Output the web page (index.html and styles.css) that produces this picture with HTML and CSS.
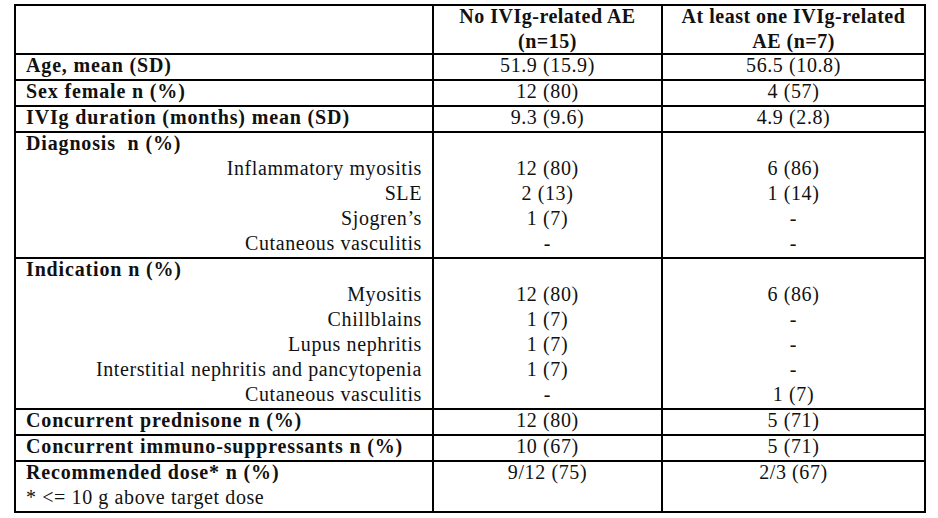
FILE: index.html
```html
<!DOCTYPE html>
<html>
<head>
<meta charset="utf-8">
<link rel="stylesheet" href="styles.css">
</head>
<body>
<table class="tbl">
  <colgroup>
    <col class="c1"><col class="c2"><col class="c3">
  </colgroup>
  <tr class="head">
    <td></td>
    <td class="val"><div class="ln">No IVIg-related AE</div><div class="ln">(n=15)</div></td>
    <td class="val"><div class="ln">At least one IVIg-related</div><div class="ln">AE (n=7)</div></td>
  </tr>
  <tr>
    <td class="lbl"><div class="ln">Age, mean (SD)</div></td>
    <td class="val"><div class="ln">51.9 (15.9)</div></td>
    <td class="val"><div class="ln">56.5 (10.8)</div></td>
  </tr>
  <tr>
    <td class="lbl"><div class="ln">Sex female n (%)</div></td>
    <td class="val"><div class="ln">12 (80)</div></td>
    <td class="val"><div class="ln">4 (57)</div></td>
  </tr>
  <tr>
    <td class="lbl"><div class="ln">IVIg duration (months) mean (SD)</div></td>
    <td class="val"><div class="ln">9.3 (9.6)</div></td>
    <td class="val"><div class="ln">4.9 (2.8)</div></td>
  </tr>
  <tr class="group">
    <td class="lbl">
      <div class="ln">Diagnosis&nbsp; n (%)</div>
      <div class="ln sub">Inflammatory myositis</div>
      <div class="ln sub">SLE</div>
      <div class="ln sub">Sjogren’s</div>
      <div class="ln sub">Cutaneous vasculitis</div>
    </td>
    <td class="val">
      <div class="ln">&nbsp;</div>
      <div class="ln">12 (80)</div>
      <div class="ln">2 (13)</div>
      <div class="ln">1 (7)</div>
      <div class="ln">-</div>
    </td>
    <td class="val">
      <div class="ln">&nbsp;</div>
      <div class="ln">6 (86)</div>
      <div class="ln">1 (14)</div>
      <div class="ln">-</div>
      <div class="ln">-</div>
    </td>
  </tr>
  <tr class="group">
    <td class="lbl">
      <div class="ln">Indication n (%)</div>
      <div class="ln sub">Myositis</div>
      <div class="ln sub">Chillblains</div>
      <div class="ln sub">Lupus nephritis</div>
      <div class="ln sub">Interstitial nephritis and pancytopenia</div>
      <div class="ln sub">Cutaneous vasculitis</div>
    </td>
    <td class="val">
      <div class="ln">&nbsp;</div>
      <div class="ln">12 (80)</div>
      <div class="ln">1 (7)</div>
      <div class="ln">1 (7)</div>
      <div class="ln">1 (7)</div>
      <div class="ln">-</div>
    </td>
    <td class="val">
      <div class="ln">&nbsp;</div>
      <div class="ln">6 (86)</div>
      <div class="ln">-</div>
      <div class="ln">-</div>
      <div class="ln">-</div>
      <div class="ln">1 (7)</div>
    </td>
  </tr>
  <tr>
    <td class="lbl"><div class="ln">Concurrent prednisone n (%)</div></td>
    <td class="val"><div class="ln">12 (80)</div></td>
    <td class="val"><div class="ln">5 (71)</div></td>
  </tr>
  <tr>
    <td class="lbl"><div class="ln">Concurrent immuno-suppressants n (%)</div></td>
    <td class="val"><div class="ln">10 (67)</div></td>
    <td class="val"><div class="ln">5 (71)</div></td>
  </tr>
  <tr class="group">
    <td class="lbl">
      <div class="ln">Recommended dose* n (%)</div>
      <div class="ln note">* &lt;= 10 g above target dose</div>
    </td>
    <td class="val"><div class="ln">9/12 (75)</div><div class="ln">&nbsp;</div></td>
    <td class="val"><div class="ln">2/3 (67)</div><div class="ln">&nbsp;</div></td>
  </tr>
</table>
</body>
</html>
```
FILE: styles.css
```css
html, body {
  margin: 0;
  padding: 0;
  background: #ffffff;
}

body {
  padding: 4px 0 0 14px;
  font-family: "Liberation Serif", "Times New Roman", serif;
  font-size: 20px;
  letter-spacing: 0.6px;
  color: #111;
}

.tbl {
  border-collapse: separate;
  border-spacing: 0;
  table-layout: fixed;
  width: 912px;
  border-top: 2px solid #000;
  border-left: 2px solid #000;
}

.c1 { width: 418px; }
.c2 { width: 229px; }
.c3 { width: 263px; }

.tbl td {
  vertical-align: top;
  padding: 0 10px 4px;
  line-height: 20px;
  border-right: 2px solid #000;
  border-bottom: 2px solid #000;
  white-space: nowrap;
}

.head td {
  font-weight: bold;
  padding-bottom: 2px;
  letter-spacing: 0.5px;
}

.head .ln + .ln,
.group .ln + .ln {
  margin-top: 5px;
}

.lbl {
  font-weight: bold;
  text-align: left;
  letter-spacing: 0.85px;
}

.lbl .sub {
  font-weight: normal;
  text-align: right;
  letter-spacing: 0.6px;
}

.lbl .note {
  font-weight: normal;
  letter-spacing: 0.6px;
}

.val {
  text-align: center;
}
```
